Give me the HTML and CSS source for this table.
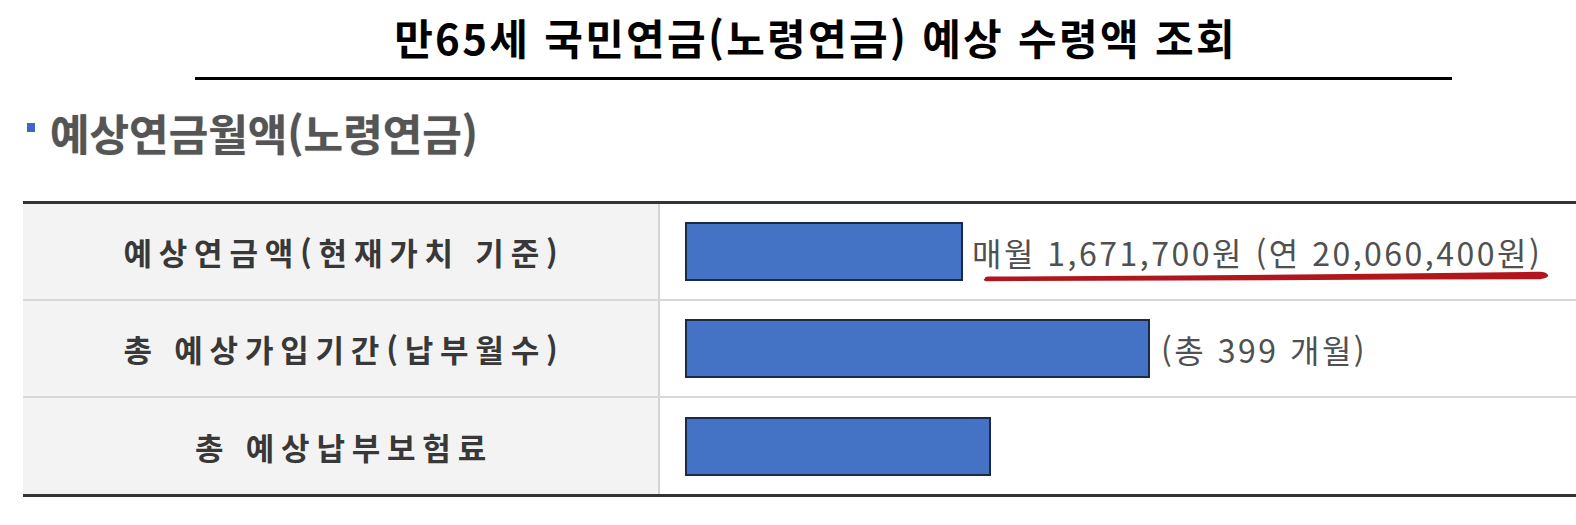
FILE: index.html
```html
<!DOCTYPE html>
<html lang="ko">
<head>
<meta charset="utf-8">
<title>만65세 국민연금 예상 수령액 조회</title>
<link rel="stylesheet" href="styles.css">
</head>
<body>
<header class="title-wrap">
  <h1 class="title">만65세 국민연금(노령연금) 예상 수령액 조회</h1>
</header>
<h2 class="section"><span class="bullet"></span>예상연금월액(노령연금)</h2>
<div class="table">
  <div class="row">
    <div class="th">예상연금액(현재가치 기준)</div>
    <div class="td">
      <div class="bar" style="width:278px"></div>
      <span class="val first">매월 1,671,700원 (연 20,060,400원)</span>
      <svg class="underline" viewBox="0 0 572 16" preserveAspectRatio="none" aria-hidden="true">
        <path d="M5,10.5 Q2,12 6,13.2 L200,12.6 L420,11.6 L560,11.2 Q569,10.2 568,7 Q566,3.4 558,3.8 L420,5.6 L200,7.6 L8,8.6 Q4,9 5,10.5 Z" fill="#b0161c"/>
      </svg>
    </div>
  </div>
  <div class="row">
    <div class="th">총 예상가입기간(납부월수)</div>
    <div class="td">
      <div class="bar" style="width:465px"></div>
      <span class="val second">(총 399 개월)</span>
    </div>
  </div>
  <div class="row last">
    <div class="th">총 예상납부보험료</div>
    <div class="td">
      <div class="bar" style="width:306px"></div>
    </div>
  </div>
</div>
</body>
</html>
```
FILE: styles.css
```css
html, body {
  margin: 0;
  padding: 0;
  background: #ffffff;
}

body {
  font-family: "Noto Sans CJK KR", "Noto Sans", sans-serif;
  width: 1576px;
  overflow: hidden;
}

.title-wrap {
  box-sizing: border-box;
  margin: 0 0 0 195px;
  width: 1257px;
  padding: 17px 16px 20px 0;
  border-bottom: 3px solid #000000;
}

.title {
  margin: 0;
  font-size: 42px;
  line-height: 40px;
  font-weight: 700;
  text-align: center;
  letter-spacing: 2.3px;
  color: #000000;
}

.section {
  margin: 30px 0 0 27px;
  display: flex;
  align-items: center;
  gap: 15px;
  font-size: 43px;
  line-height: 44px;
  font-weight: 700;
  color: #555555;
  text-shadow: 0 0 1px rgba(85, 85, 85, 0.6);
}

.bullet {
  flex: none;
  align-self: flex-start;
  margin-top: 13px;
  width: 8px;
  height: 9px;
  background: #3d66c9;
}

.table {
  margin: 47px 0 0 23px;
  border-top: 3px solid #333333;
  border-bottom: 3px solid #333333;
}

.row {
  display: grid;
  grid-template-columns: 637px 1fr;
  box-sizing: border-box;
  height: 97px;
  border-bottom: 2px solid #d8d8d8;
}

.row.last {
  height: 96px;
  border-bottom: none;
}

.th {
  display: flex;
  align-items: center;
  justify-content: center;
  padding-left: 7px;
  background: #f3f3f3;
  border-right: 2px solid #d4d4d4;
  font-size: 31px;
  font-weight: 700;
  letter-spacing: 6.8px;
  color: #383838;
}

.td {
  position: relative;
  display: flex;
  align-items: center;
  padding-left: 25px;
}

.bar {
  flex: none;
  box-sizing: border-box;
  height: 59px;
  border: 2px solid #1b2a4a;
  background: #4472c4;
}

.val {
  font-size: 32px;
  line-height: 40px;
  letter-spacing: 2.5px;
  color: #505050;
  font-weight: 400;
  white-space: nowrap;
}

.val.first {
  margin-left: 9px;
}

.val.second {
  margin-left: 11px;
}

.underline {
  position: absolute;
  left: 320px;
  top: 64px;
  width: 572px;
  height: 16px;
}
```
